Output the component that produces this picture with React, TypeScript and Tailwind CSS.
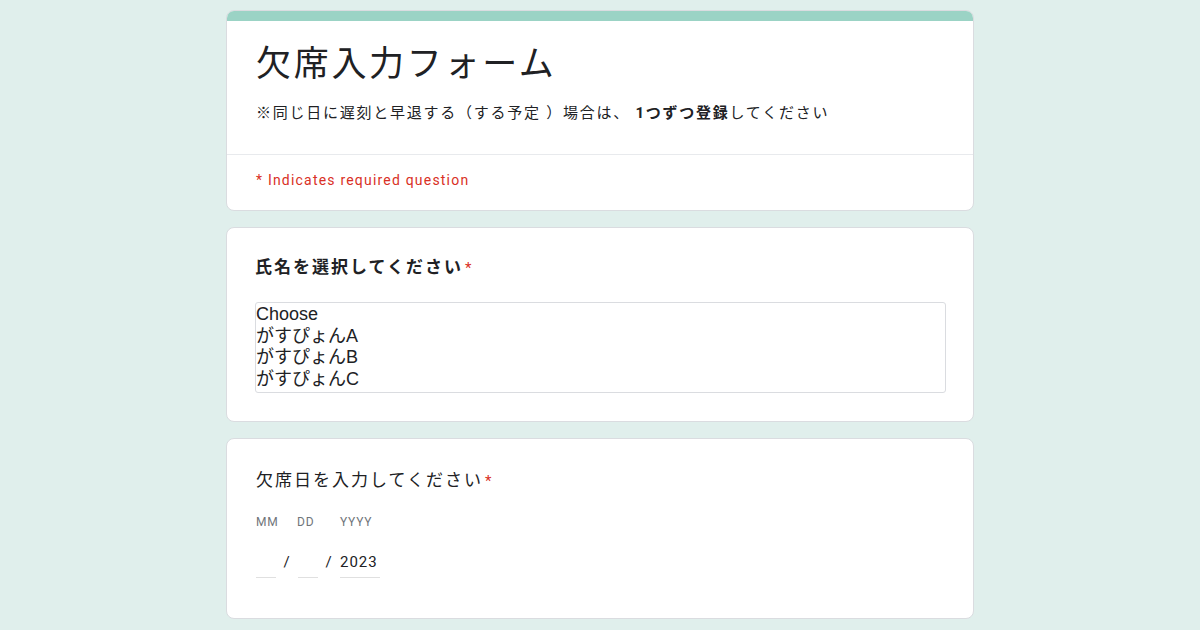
import React from "react";

export default function App() {
  return (
    <div className="w-[1200px] h-[630px] overflow-hidden bg-[#e0efec]" style={{ fontFamily: 'Roboto, "Noto Sans CJK JP", sans-serif' }}>
      <div className="w-[748px] ml-[226px] pt-[10px] flex flex-col gap-[16px]">
        {/* Header card */}
        <div className="bg-white rounded-[8px] border border-[#dadce0] overflow-hidden">
          <div className="h-[10px] bg-[#9bd3c5]" />
          <div className="px-[29px] pt-[17px] pb-[31px]">
            <div className="text-[35px] leading-[46px] text-[#202124] tracking-[2.7px]" style={{ fontFamily: '"Noto Sans CJK JP", sans-serif' }}>欠席入力フォーム</div>
            <div className="mt-[19px] text-[15px] leading-[20px] text-[#202124] tracking-[1.75px]">
              ※同じ日に遅刻と早退する（する予定 ）場合は、 <span className="font-bold">1つずつ登録</span>してください
            </div>
          </div>
          <div className="border-t border-[#e8eaed] px-[29px] pt-[15px] pb-[20px] text-[14px] leading-[20px] text-[#d93025] tracking-[1.2px]">
            * Indicates required question
          </div>
        </div>

        {/* Name card */}
        <div className="bg-white rounded-[8px] border border-[#dadce0] px-[28px] pt-[27px] pb-[28px]">
          <div className="text-[17px] leading-[24px] text-[#202124] font-bold tracking-[2px]">
            氏名を選択してください<span className="text-[#d93025] font-normal text-[15px] ml-[2px]">*</span>
          </div>
          <div className="mt-[22px] h-[91px] border border-[#dadce0] rounded-[3px] text-[18px] leading-[21.5px] text-[#202124] pt-[1px] w-[691px]" style={{ fontFamily: '"Liberation Sans", "Noto Sans CJK JP", sans-serif' }}>
            <div>Choose</div>
            <div>がすぴょんA</div>
            <div>がすぴょんB</div>
            <div>がすぴょんC</div>
          </div>
        </div>

        {/* Date card */}
        <div className="bg-white rounded-[8px] border border-[#dadce0] px-[29px] pt-[29px] pb-[40px]">
          <div className="text-[17px] leading-[24px] text-[#202124] tracking-[2px]">
            欠席日を入力してください<span className="text-[#d93025] text-[15px] ml-[2px]">*</span>
          </div>
          <div className="mt-[21px] flex text-[12px] leading-[16px] text-[#70757a] tracking-[0.8px]">
            <div className="w-[41px]">MM</div>
            <div className="w-[43px]">DD</div>
            <div>YYYY</div>
          </div>
          <div className="mt-[16px] flex items-start text-[15px] leading-[20px] text-[#202124] tracking-[1px]">
            <div className="w-[20px] h-[32px] border-b border-[#e0e0e0]" />
            <div className="w-[22px] text-center pt-[6px]">/</div>
            <div className="w-[20px] h-[32px] border-b border-[#e0e0e0]" />
            <div className="w-[22px] text-center pt-[6px]">/</div>
            <div className="w-[40px] h-[32px] pt-[6px] border-b border-[#e0e0e0]">2023</div>
          </div>
        </div>
      </div>
    </div>
  );
}
